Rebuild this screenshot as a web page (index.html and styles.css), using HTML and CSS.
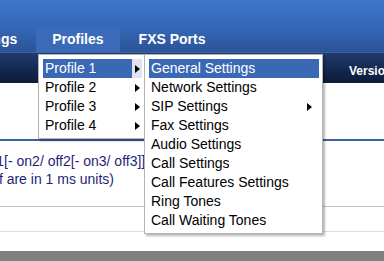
FILE: index.html
```html
<!DOCTYPE html>
<html lang="en">
<head>
    <meta charset="utf-8">
    <meta name="viewport" content="width=device-width, initial-scale=1">
    <title>FXS Gateway - Profiles</title>
    <link rel="stylesheet" href="styles.css">
</head>
<body>
    <div class="header">
        <div class="nav">
            <div class="nav-item">Settings</div>
            <div class="nav-item active">Profiles</div>
            <div class="nav-item">FXS Ports</div>
        </div>
    </div>

    <div class="subbar">
        <span class="version">Version</span>
    </div>

    <div class="content">
        <div class="rule"></div>
        <div class="cadence">
            <div class="line first">off1[- on2/ off2[- on3/ off3]]</div>
            <div class="line second">on/off are in 1 ms units)</div>
        </div>
        <div class="row-line dark"></div>
        <div class="row-line light"></div>
    </div>

    <div class="footer"></div>

    <!-- menu aperto su Profiles -->
    <div class="menu profiles-menu">
        <div class="menu-item selected"><span class="label">Profile 1</span><span class="arrow"></span></div>
        <div class="menu-item"><span class="label">Profile 2</span><span class="arrow"></span></div>
        <div class="menu-item"><span class="label">Profile 3</span><span class="arrow"></span></div>
        <div class="menu-item"><span class="label">Profile 4</span><span class="arrow"></span></div>
    </div>

    <div class="menu sub-menu">
        <div class="menu-item selected"><span class="label">General Settings</span></div>
        <div class="menu-item"><span class="label">Network Settings</span></div>
        <div class="menu-item"><span class="label">SIP Settings</span><span class="arrow"></span></div>
        <div class="menu-item"><span class="label">Fax Settings</span></div>
        <div class="menu-item"><span class="label">Audio Settings</span></div>
        <div class="menu-item"><span class="label">Call Settings</span></div>
        <div class="menu-item"><span class="label">Call Features Settings</span></div>
        <div class="menu-item"><span class="label">Ring Tones</span></div>
        <div class="menu-item"><span class="label">Call Waiting Tones</span></div>
    </div>
</body>
</html>
```

FILE: styles.css
```css
body {
    margin: 0;
    font-family: 'Liberation Sans', Arial, sans-serif;
    background: #fff;
    overflow: hidden;
    width: 384px;
    height: 261px;
    position: relative;
}
.header {
    height: 52px;
    background: linear-gradient(180deg, #3e75c9 0%, #3566b4 55%, #2b5398 100%);
    display: flex;
    align-items: flex-end;
    border-bottom: 1px solid #3b63a6;
}
.nav {
    display: flex;
    gap: 3px;
    margin-left: -54px;
}
.nav-item {
    color: #fff;
    font-weight: bold;
    font-size: 14px;
    line-height: 26px;
    padding: 0 16px;
    white-space: nowrap;
}
.nav-item.active {
    background: #3a6ab8;
}
.subbar {
    height: 30px;
    background: linear-gradient(180deg, #203c6c 0%, #142a52 50%, #0d1b38 100%);
    display: flex;
    align-items: center;
    padding-left: 349px;
    white-space: nowrap;
    overflow: hidden;
}
.version {
    color: #fff;
    font-weight: bold;
    font-size: 12px;
    padding-top: 6px;
}
.content {
    padding-top: 56px;
}
.rule {
    height: 2px;
    background: #3a60a4;
}
.cadence {
    padding-top: 11px;
    height: 54px;
    color: #1f1f78;
    font-size: 14px;
    line-height: 18px;
    white-space: nowrap;
}
.line.first {
    margin-left: -19px;
}
.line.second {
    margin-left: -32px;
}
.row-line {
    height: 1px;
}
.row-line.dark {
    background: #c4c4c4;
    margin-bottom: 24px;
}
.row-line.light {
    background: #dcdcdc;
}
.footer {
    position: absolute;
    left: 0;
    right: 0;
    top: 251px;
    height: 10px;
    background: #808080;
}
.menu {
    position: absolute;
    top: 54px;
    background: #fff;
    border: 1px solid #b4b4b4;
    box-shadow: 2px 2px 2px rgba(0, 0, 0, 0.28);
    box-sizing: border-box;
    padding: 4px 2px 3px 4px;
}
.profiles-menu {
    left: 38px;
    width: 107px;
}
.sub-menu {
    left: 144px;
    width: 179px;
}
.menu-item {
    display: flex;
    align-items: center;
    height: 19px;
    font-size: 14px;
    color: #000;
    white-space: nowrap;
}
.menu-item .label {
    flex: 1;
    padding-left: 2px;
    line-height: 19px;
}
.profiles-menu .menu-item .label {
    flex: 0 0 87px;
}
.profiles-menu .arrow {
    flex: 0 0 10px;
    height: 19px;
    display: flex;
    align-items: center;
    justify-content: center;
}
.arrow::before {
    content: "";
    display: block;
    border-left: 5px solid #000;
    border-top: 4.5px solid transparent;
    border-bottom: 4.5px solid transparent;
}
.sub-menu .arrow {
    margin-right: 8px;
}
.menu-item.selected .label {
    background: #3b68b5;
    color: #fff;
}
.profiles-menu .menu-item.selected .arrow {
    background: #dfe3ef;
}
.sub-menu .menu-item.selected {
    margin-right: 1px;
}
```
